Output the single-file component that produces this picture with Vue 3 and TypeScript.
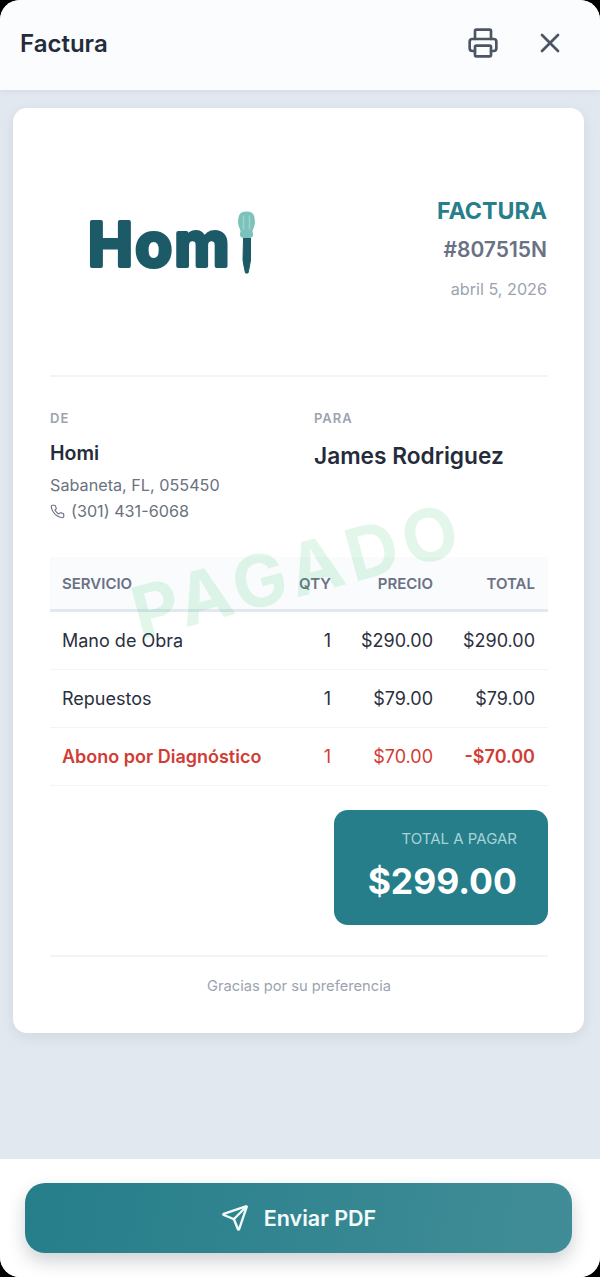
<script setup lang="ts">
interface Line {
  name: string;
  qty: number;
  price: string;
  total: string;
  discount?: boolean;
}

const lines: Line[] = [
  { name: "Mano de Obra", qty: 1, price: "$290.00", total: "$290.00" },
  { name: "Repuestos", qty: 1, price: "$79.00", total: "$79.00" },
  { name: "Abono por Diagnóstico", qty: 1, price: "$70.00", total: "-$70.00", discount: true },
];
</script>

<template>
  <div class="sheet">
    <header class="top-bar">
      <h1 class="top-title">Factura</h1>
      <div class="top-actions">
        <svg class="icon-print" viewBox="0 0 24 24" fill="none" stroke="currentColor" stroke-width="2" stroke-linecap="round" stroke-linejoin="round">
          <path d="M6 18H4a2 2 0 0 1-2-2v-5a2 2 0 0 1 2-2h16a2 2 0 0 1 2 2v5a2 2 0 0 1-2 2h-2" />
          <path d="M6 9V3a1 1 0 0 1 1-1h10a1 1 0 0 1 1 1v6" />
          <rect x="6" y="14" width="12" height="8" rx="1" />
        </svg>
        <svg class="icon-close" viewBox="0 0 24 24" fill="none" stroke="currentColor" stroke-width="2" stroke-linecap="round" stroke-linejoin="round">
          <path d="M18 6 6 18" />
          <path d="m6 6 12 12" />
        </svg>
      </div>
    </header>

    <main class="body-area">
      <section class="invoice">
        <div class="watermark">PAGADO</div>

        <div class="invoice-head">
          <svg class="logo" viewBox="0 0 172 70">
            <text x="3" y="58" class="logo-text">Hom</text>
            <path d="M158.500 30h7v22l-1 6-1.500 7h-2.500l-1.500-7-1-6z" fill="#1b5a66" stroke="#1b5a66" stroke-width="1" stroke-linejoin="round" />
            <path d="M156.500 4.500c3-1.200 7-1.200 10 0 2.600 1.300 3.500 6 3.400 10-.1 3.500-1.700 5.500-2.400 8.500-.2 1.200.8 2.200.6 4-.2 2-2 3-3.600 3h-6c-1.600 0-3.400-1-3.600-3-.2-1.800.8-2.800.6-4-.7-3-2.300-5-2.400-8.500-.1-4 .8-8.700 3.400-10z" fill="#7cc2bb" />
            <path d="M158.500 8v13M164.500 8v13" stroke="#9bd5cf" stroke-width="1.500" stroke-linecap="round" />
          </svg>
          <div class="doc-meta">
            <div class="doc-kind">FACTURA</div>
            <div class="doc-number">#807515N</div>
            <div class="doc-date">abril 5, 2026</div>
          </div>
        </div>

        <div class="parties">
          <div class="party">
            <div class="party-label">DE</div>
            <div class="from-name">Homi</div>
            <div class="from-line">Sabaneta, FL, 055450</div>
            <div class="from-line phone">
              <svg class="icon-phone" viewBox="0 0 24 24" fill="none" stroke="currentColor" stroke-width="1.800" stroke-linecap="round" stroke-linejoin="round">
                <path d="M22 16.920v3a2 2 0 0 1-2.180 2 19.790 19.790 0 0 1-8.630-3.070 19.500 19.500 0 0 1-6-6 19.790 19.790 0 0 1-3.070-8.670A2 2 0 0 1 4.110 2h3a2 2 0 0 1 2 1.720c.127.960.361 1.903.7 2.810a2 2 0 0 1-.45 2.110L8.090 9.910a16 16 0 0 0 6 6l1.270-1.270a2 2 0 0 1 2.110-.45c.907.339 1.850.573 2.810.7A2 2 0 0 1 22 16.920z" />
              </svg>
              (301) 431-6068
            </div>
          </div>
          <div class="party">
            <div class="party-label">PARA</div>
            <div class="to-name">James Rodriguez</div>
          </div>
        </div>

        <table class="items">
          <colgroup>
            <col class="col-name" />
            <col class="col-qty" />
            <col class="col-price" />
            <col class="col-total" />
          </colgroup>
          <thead>
            <tr>
              <th class="left">SERVICIO</th>
              <th>QTY</th>
              <th>PRECIO</th>
              <th>TOTAL</th>
            </tr>
          </thead>
          <tbody>
            <tr v-for="line in lines" :key="line.name" :class="{ discount: line.discount }">
              <td class="left">{{ line.name }}</td>
              <td>{{ line.qty }}</td>
              <td>{{ line.price }}</td>
              <td class="line-total">{{ line.total }}</td>
            </tr>
          </tbody>
        </table>

        <div class="total-row">
          <div class="total-box">
            <div class="total-label">TOTAL A PAGAR</div>
            <div class="total-amount">$299.00</div>
          </div>
        </div>

        <div class="thanks">Gracias por su preferencia</div>
      </section>
    </main>

    <footer class="bottom-bar">
      <button class="send-btn">
        <svg class="icon-send" viewBox="0 0 24 24" fill="none" stroke="currentColor" stroke-width="2" stroke-linecap="round" stroke-linejoin="round">
          <path d="M14.536 21.686a.5.5 0 0 0 .937-.024l6.500-19a.496.496 0 0 0-.635-.635l-19 6.500a.5.5 0 0 0-.024.937l7.930 3.180a2 2 0 0 1 1.112 1.110z" />
          <path d="m21.854 2.147-10.940 10.939" />
        </svg>
        Enviar PDF
      </button>
    </footer>
  </div>
</template>

<style>
html, body { background: #000; }
</style>

<style scoped>
.sheet {
  width: 600px; height: 1277px; display: flex; flex-direction: column; overflow: hidden;
  border-radius: 20px; background: #e2e8f0;
  font-family: Inter, "Liberation Sans", sans-serif; color: #2b3040;
}

.top-bar {
  position: relative; height: 90px; flex: none; box-sizing: border-box; display: flex; align-items: center; justify-content: space-between;
  padding: 0 34px 4px 20px; background: #fafcfd; box-shadow: 0 1px 6px rgba(15, 23, 42, .07);
}
.top-title { margin: 0; font-size: 24px; font-weight: 600; color: #252b3b; }
.top-actions { display: flex; align-items: center; gap: 35px; color: #4b5563; }
.icon-print { width: 32px; height: 32px; }
.icon-close { width: 32px; height: 32px; }

.body-area { flex: 1; padding: 18px 16px 0 13px; }

.invoice {
  position: relative; height: 925px; box-sizing: border-box; padding: 0 36px 0 37px;
  background: #fff; border-radius: 14px; box-shadow: 0 4px 14px rgba(15, 23, 42, .08);
  display: flex; flex-direction: column;
}

.watermark {
  position: absolute; left: 115px; top: 429px; width: 320px; text-align: center;
  font-size: 72px; font-weight: 700; letter-spacing: 6px; line-height: 1;
  color: rgba(34, 197, 94, .13); transform: rotate(-15deg); pointer-events: none;
}

.invoice-head {
  height: 269px; flex: none; box-sizing: border-box; display: flex; justify-content: space-between;
  border-bottom: 2px solid #f1f5f9;
}
.logo { width: 172px; height: 70px; margin: 100px 0 0 35px; overflow: visible; }
.logo-text {
  font-family: Inter, sans-serif; font-size: 60px; font-weight: 700; letter-spacing: 2.500px;
  fill: #1b5a66; stroke: #1b5a66; stroke-width: 4px; stroke-linejoin: round; paint-order: stroke fill;
}

.doc-meta { text-align: right; padding: 89px 1px 0 0; }
.doc-kind { font-size: 23.200px; line-height: 29px; font-weight: 700; color: #267f8a; }
.doc-number { margin-top: 11px; font-size: 21px; line-height: 25px; font-weight: 600; color: #6b7185; }
.doc-date { margin-top: 17px; font-size: 16.200px; line-height: 20px; color: #9ca3af; }

.parties { display: flex; padding-top: 33px; height: 180px; flex: none; box-sizing: border-box; }
.party { width: 264px; flex: none; }
.party-label { font-size: 13px; line-height: 16px; font-weight: 600; letter-spacing: 1px; color: #9ca3af; }
.from-name { margin-top: 15px; font-size: 19.500px; line-height: 24px; font-weight: 600; color: #252b3b; }
.from-line { margin-top: 10px; font-size: 16.200px; line-height: 21px; color: #6b7280; }
.from-line.phone { margin-top: 5px; display: flex; align-items: center; gap: 6px; }
.icon-phone { width: 15px; height: 15px; }
.to-name { margin-top: 15px; font-size: 22.700px; line-height: 30px; font-weight: 600; color: #252b3b; }

.items { width: 100%; table-layout: fixed; border-collapse: collapse; }
.col-name { width: 230px; }
.col-qty { width: 57px; }
.col-price { width: 108px; }
.col-total { width: 103px; }
.items th {
  height: 52px; padding: 0 12px; background: rgba(248, 250, 252, .8); border-bottom: 3px solid #e2e8f0;
  font-size: 15px; font-weight: 600; color: #6b7185; text-align: right;
}
.items td {
  height: 57px; padding: 0 12px; border-bottom: 1px solid #f1f5f9;
  font-size: 18px; color: #2b3040; text-align: right; white-space: nowrap;
}
.items th.left, .items td.left { text-align: left; }
.items th:nth-child(2), .items td:nth-child(2) { padding-right: 6px; }
.items th:nth-child(4), .items td:nth-child(4) { padding-right: 13px; }
.items .discount td { color: #d13c34; }
.items .discount td.left, .items .discount td.line-total { font-weight: 600; }

.total-row { display: flex; justify-content: flex-end; margin-top: 24px; }
.total-box {
  width: 214px; height: 115px; box-sizing: border-box; padding: 19px 31px 0 0; text-align: right;
  background: #257e8a; border-radius: 14px; color: #fff;
}
.total-label { font-size: 15px; line-height: 20px; color: #a8d3d8; }
.total-amount { margin-top: 10px; font-size: 35.500px; line-height: 46px; font-weight: 700; }

.thanks {
  margin-top: 30px; padding-top: 20px; border-top: 2px solid #f1f5f9; text-align: center;
  font-size: 14.700px; line-height: 18px; color: #9ca3af;
}

.bottom-bar { height: 118px; flex: none; box-sizing: border-box; padding: 24px 28px 0 25px; background: #fff; }
.send-btn {
  width: 100%; height: 70px; display: flex; align-items: center; justify-content: center; gap: 15px;
  border: none; border-radius: 20px; background: linear-gradient(100deg, #257e8a, #418d97);
  box-shadow: 0 8px 18px rgba(15, 23, 42, .2);
  font-family: inherit; font-size: 21.500px; font-weight: 600; color: #f4fbfb;
}
.icon-send { width: 28px; height: 28px; }
</style>
